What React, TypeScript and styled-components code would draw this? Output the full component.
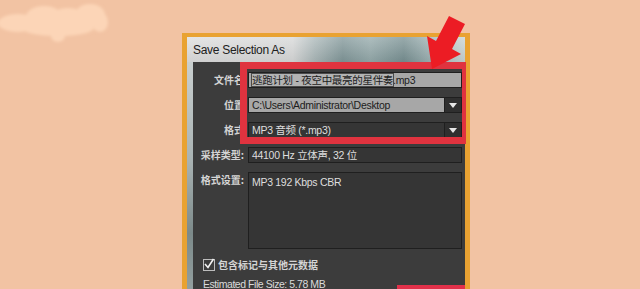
import * as React from 'react';
import styled, { createGlobalStyle } from 'styled-components';

const GlobalStyle = createGlobalStyle`
  html, body {
    margin: 0;
    padding: 0;
    background: #f2c3a3;
  }
`;

const Page = styled.div`
  position: relative;
  width: 640px;
  height: 289px;
  overflow: hidden;
  background: #f2c3a3;
  font-family: 'Liberation Sans', 'Noto Sans CJK SC', sans-serif;
`;

const Cloud = styled.svg`
  position: absolute;
  left: 0;
  top: 0;
`;

const Arrow = styled.svg`
  position: absolute;
  left: 420px;
  top: 10px;
`;

const Dialog = styled.div`
  margin: 33px 0 0 182px;
  width: 278px;
  height: 270px;
  border: 5px solid #e9a232;
  border-top-width: 4px;
  border-bottom: none;
  display: flex;
  flex-direction: column;
`;

const TitleBar = styled.div`
  height: 25px;
  display: flex;
  align-items: center;
  padding-left: 6px;
  background:
    linear-gradient(180deg, rgba(255, 255, 255, 0.25) 0%, rgba(0, 0, 0, 0.05) 100%),
    linear-gradient(90deg, #dcdcdc 0%, #d6d7d7 38%, #a9b6b7 46%, #7f9597 56%, #93a8a9 66%, #768e90 78%, #a6b9ba 90%, #c8d2d2 100%);
  color: #202020;
  font-size: 12px;
  letter-spacing: -0.3px;
`;

const Frame = styled.div`
  flex: 1;
  display: flex;
`;

const Strip = styled.div`
  width: 6px;
  background: linear-gradient(180deg, #c9cfcf 0%, #a9b3b3 40%, #7c8a8a 70%, #9aa6a6 100%);
`;

const Body = styled.div`
  position: relative;
  flex: 1;
  background: #3c3c3c;
  padding: 10px 3px 0 0;
  display: flex;
  flex-direction: column;
  gap: 9px;
`;

const Row = styled.div`
  display: flex;
  align-items: flex-start;
`;

const Label = styled.div`
  width: 51px;
  padding-right: 4px;
  text-align: right;
  color: #d4d4d4;
  font-family: 'Noto Sans CJK SC', sans-serif;
  font-size: 10px;
  font-weight: 700;
  line-height: 16px;
  white-space: nowrap;
  flex-shrink: 0;
`;

const Field = styled.div<{ $light?: boolean; $tall?: boolean }>`
  flex: 1;
  display: flex;
  align-items: ${(p) => (p.$tall ? 'flex-start' : 'center')};
  height: ${(p) => (p.$tall ? '77px' : '16px')};
  box-sizing: border-box;
  border: 1px solid #1f1f1f;
  background: ${(p) => (p.$light ? '#a7a7a7' : '#353535')};
  color: ${(p) => (p.$light ? '#1c1c1c' : '#dedede')};
  font-size: 10.5px;
  letter-spacing: -0.3px;
  line-height: 14px;
  padding-left: 3px;
  padding-top: ${(p) => (p.$tall ? '2px' : '0')};
  white-space: nowrap;
  overflow: hidden;
`;

const FieldText = styled.span`
  flex: 1;
  font-family: 'Liberation Sans', 'Noto Sans CJK SC', sans-serif;
`;

const Selected = styled.span`
  background: #b3b3b3;
  outline: 1px solid #4a4a4a;
`;

const DropButton = styled.div`
  width: 16px;
  height: 14px;
  background: #2f2f2f;
  border-left: 1px solid #1f1f1f;
  display: flex;
  align-items: center;
  justify-content: center;
  flex-shrink: 0;
  &::after {
    content: '';
    border-left: 4px solid transparent;
    border-right: 4px solid transparent;
    border-top: 5px solid #e6e6e6;
  }
`;

const CheckRow = styled.div`
  display: flex;
  align-items: center;
  gap: 3px;
  padding-left: 10px;
  margin-top: -1px;
  color: #d4d4d4;
  font-family: 'Noto Sans CJK SC', sans-serif;
  font-size: 10px;
  font-weight: 700;
`;

const CheckBox = styled.div`
  width: 10px;
  height: 10px;
  border: 1px solid #bdbdbd;
  position: relative;
`;

const Footer = styled.div`
  display: flex;
  justify-content: space-between;
  align-items: flex-start;
  padding-left: 10px;
  margin-top: -4px;
`;

const Estimate = styled.div`
  color: #dadada;
  font-size: 10.5px;
  letter-spacing: -0.45px;
  line-height: 14px;
`;

const RedButton = styled.div`
  width: 68px;
  height: 20px;
  margin: 8px -3px 0 0;
  background: #e2314a;
`;

const Highlight = styled.div`
  position: absolute;
  left: 47px;
  top: 0;
  width: 226px;
  height: 82px;
  box-sizing: border-box;
  border: 7px solid #e0333f;
  border-right-width: 4px;
  pointer-events: none;
`;

const App = () => (
  <Page>
    <GlobalStyle />
    <Cloud width="120" height="55" viewBox="0 0 120 55">
      <defs>
        <filter id="soft">
          <feGaussianBlur stdDeviation="1.5" />
        </filter>
      </defs>
      <g fill="#fcd5b7" filter="url(#soft)">
        <ellipse cx="18" cy="23" rx="20" ry="9" />
        <ellipse cx="44" cy="17" rx="18" ry="11" />
        <ellipse cx="68" cy="19" rx="18" ry="11" />
        <ellipse cx="90" cy="15" rx="15" ry="11" />
        <ellipse cx="100" cy="22" rx="8" ry="10" />
        <ellipse cx="58" cy="28" rx="36" ry="8" />
        <ellipse cx="58" cy="36" rx="7" ry="6" />
      </g>
    </Cloud>
    <Dialog>
      <TitleBar>Save Selection As</TitleBar>
      <Frame>
        <Strip />
        <Body>
          <Row>
            <Label>文件名</Label>
            <Field $light>
              <FieldText>
                <Selected>逃跑计划 - 夜空中最亮的星伴奏</Selected>.mp3
              </FieldText>
            </Field>
          </Row>
          <Row>
            <Label>位置</Label>
            <Field $light>
              <FieldText>C:\Users\Administrator\Desktop</FieldText>
              <DropButton />
            </Field>
          </Row>
          <Row>
            <Label>格式</Label>
            <Field>
              <FieldText>MP3 音频 (*.mp3)</FieldText>
              <DropButton />
            </Field>
          </Row>
          <Row>
            <Label>采样类型:</Label>
            <Field>
              <FieldText>44100 Hz 立体声, 32 位</FieldText>
            </Field>
          </Row>
          <Row>
            <Label>格式设置:</Label>
            <Field $tall>
              <FieldText>MP3 192 Kbps CBR</FieldText>
            </Field>
          </Row>
          <CheckRow>
            <CheckBox>
              <svg width="12" height="12" viewBox="0 0 12 12" style={{ position: 'absolute', left: -1, top: -2 }}>
                <path d="M2 6 L5 9.5 L10.5 1" stroke="#f2f2f2" strokeWidth="1.6" fill="none" />
              </svg>
            </CheckBox>
            包含标记与其他元数据
          </CheckRow>
          <Footer>
            <Estimate>Estimated File Size: 5.78 MB</Estimate>
            <RedButton />
          </Footer>
          <Highlight />
        </Body>
      </Frame>
    </Dialog>
    <Arrow width="50" height="64" viewBox="420 10 50 64">
      <polygon
        points="449,16 465,24 452,49 461,54 432,69 427,36 436,41"
        fill="#ec1c24"
      />
    </Arrow>
  </Page>
);

export default App;
